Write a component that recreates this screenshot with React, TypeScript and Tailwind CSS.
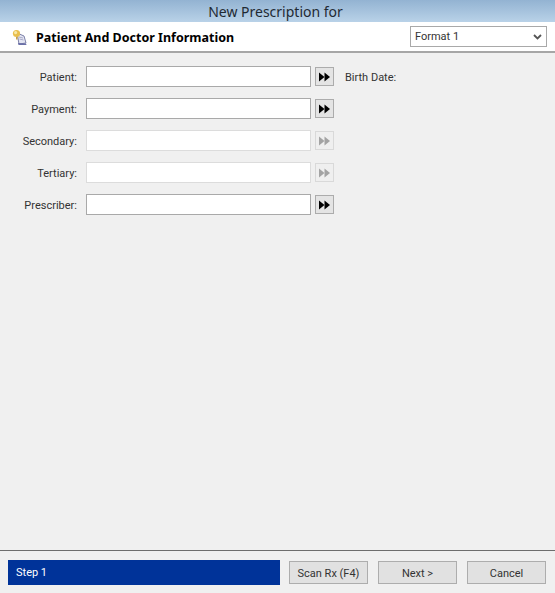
const rows = [
  { label: "Patient:", enabled: true, extra: "Birth Date:" },
  { label: "Payment:", enabled: true },
  { label: "Secondary:", enabled: false },
  { label: "Tertiary:", enabled: false },
  { label: "Prescriber:", enabled: true },
];

const ForwardIcon = ({ enabled }: { enabled: boolean }) => (
  <svg width="11" height="10" viewBox="0 0 11 10" fill={enabled ? "#000000" : "#a3a3a3"}>
    <path d="M0 0.5 L5.5 5 L0 9.5 Z" />
    <path d="M5.5 0.5 L11 5 L5.5 9.5 Z" />
  </svg>
);

const PageIcon = () => (
  <svg width="17" height="18" viewBox="0 0 17 18">
    <path d="M6 5 L13 8 L15 15 L8 16 Z" fill="#e4e6f2" stroke="#7c80a8" strokeWidth="1" />
    <path d="M7 15 L15 15.5 L15.5 17 L7.5 17 Z" fill="#6a70a8" />
    <path d="M8 9 L12 10 M8.5 11 L12.5 12" stroke="#9a9cc0" strokeWidth="0.8" />
    <circle cx="5.5" cy="5.5" r="3.6" fill="#e9bf4e" />
    <circle cx="4.6" cy="4.6" r="1.6" fill="#f8e9a8" />
    <path d="M5 9 L6.5 9 L6.5 11.5 L5 11.5 Z" fill="#c9a24a" />
  </svg>
);

const Button = ({ label, width }: { label: string; width: string }) => (
  <button
    className={`${width} h-[23px] border border-[#adadad] bg-[#e1e1e1] pt-[3px] text-[11px] leading-[13px] text-[#333333]`}
  >
    {label}
  </button>
);

export default function App() {
  return (
    <div className="flex h-[593px] w-[555px] flex-col overflow-hidden bg-[#f0f0f0] font-['Roboto',sans-serif]">
      <div className="flex h-[22px] items-center justify-center bg-gradient-to-b from-[#93b3d2] to-[#b9d2e8] pr-[4px] font-['Noto_Sans',sans-serif] text-[14px] text-[#1f2a33]">
        New Prescription for
      </div>

      <div className="flex h-[31px] items-center border-b-2 border-[#a6a6a6] bg-white pl-[11px] pr-[8px]">
        <PageIcon />
        <span className="ml-2 pt-[3px] font-['Noto_Sans',sans-serif] text-[12.5px] font-bold text-black">
          Patient And Doctor Information
        </span>
        <div className="ml-auto flex h-[21px] w-[137px] items-center justify-between border border-[#a9a9a9] bg-white pl-[4px] pr-[4px] text-[11px] text-[#333333]">
          <span className="pt-[2px]">Format 1</span>
          <svg width="9" height="6" viewBox="0 0 9 6" fill="none" stroke="#555555" strokeWidth="1.8">
            <path d="M1 1 L4.5 4.5 L8 1" />
          </svg>
        </div>
      </div>

      <div className="flex flex-1 flex-col gap-[11px] pt-[13px]">
        {rows.map((row) => (
          <div key={row.label} className="flex h-[21px] items-center">
            <span className="w-[77px] pt-[4px] text-right text-[11px] text-[#333333]">{row.label}</span>
            <div
              className={`ml-[9px] h-[21px] w-[225px] border bg-white ${
                row.enabled ? "border-[#a9a9a9]" : "border-[#dcdcdc]"
              }`}
            />
            <div
              className={`ml-[4px] flex h-[19px] w-[19px] items-center justify-center border ${
                row.enabled ? "border-[#acacac] bg-[#e4e4e4]" : "border-[#d9d9d9] bg-[#efefef]"
              }`}
            >
              <ForwardIcon enabled={row.enabled} />
            </div>
            {row.extra && <span className="ml-[11px] pt-[4px] text-[11px] text-[#333333]">{row.extra}</span>}
          </div>
        ))}
      </div>

      <div className="flex h-[43px] items-center border-t border-[#6d6d6d] pl-[8px] pr-[9px]">
        <div className="flex h-[25px] w-[272px] items-center bg-[#003399] pl-[8px] text-[11px] text-white">
          <span className="pt-[2px]">Step 1</span>
        </div>
        <div className="ml-auto flex gap-[10px]">
          <Button label="Scan Rx (F4)" width="w-[79px]" />
          <Button label="Next >" width="w-[79px]" />
          <Button label="Cancel" width="w-[79px]" />
        </div>
      </div>
    </div>
  );
}
